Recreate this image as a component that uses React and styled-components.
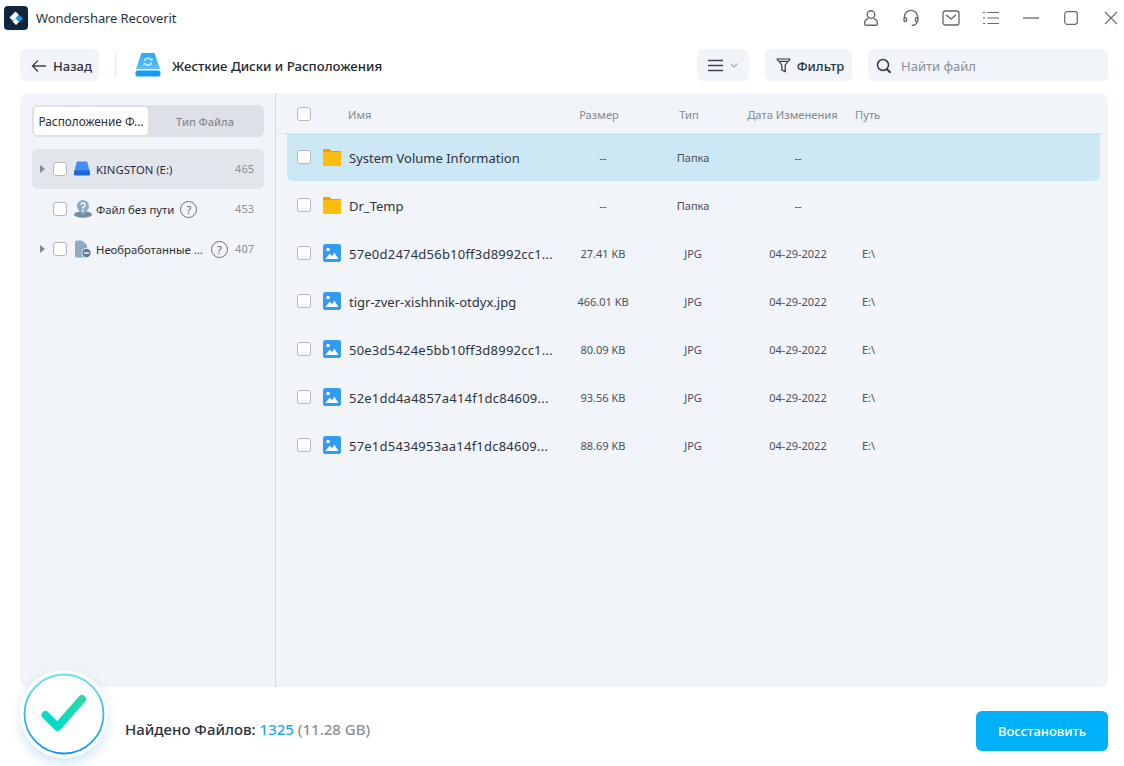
import React from 'react'
import styled, { createGlobalStyle } from 'styled-components'

const GlobalStyle = createGlobalStyle`
  html, body {
    margin: 0;
    padding: 0;
    background: #fff;
  }
  * {
    box-sizing: border-box;
  }
`

const Window = styled.div`
  position: relative;
  display: flex;
  flex-direction: column;
  width: 1124px;
  height: 766px;
  overflow: hidden;
  background: #fff;
  color: #2a2f3a;
  font-family: "Noto Sans", "Open Sans", sans-serif;
`

const TitleBar = styled.div`
  display: flex;
  align-items: center;
  height: 36px;
  padding: 0 3px 0 4px;
  flex-shrink: 0;
`

const AppName = styled.div`
  margin-left: 8px;
  font-size: 13px;
  letter-spacing: -0.1px;
  color: #2c3240;
`

const WindowIcons = styled.div`
  display: flex;
  margin-left: auto;
  margin-right: -10px;
`

const WindowIcon = styled.div`
  display: flex;
  align-items: center;
  justify-content: center;
  width: 40px;
  height: 36px;
  color: #63676f;
`

const Toolbar = styled.div`
  display: flex;
  align-items: center;
  height: 32px;
  margin-top: 13px;
  padding: 0 16px 0 20px;
  flex-shrink: 0;
`

const SoftButton = styled.div`
  display: flex;
  align-items: center;
  justify-content: center;
  height: 32px;
  width: ${p => p.$w}px;
  margin-right: ${p => p.$mr || 0}px;
  padding: 1px 0 0 ${p => p.$pl || 0}px;
  gap: ${p => p.$gap || 0}px;
  background: #f1f4f8;
  border-radius: 6px;
  font-size: 13px;
  font-weight: 500;
  color: #2c3240;
`

const Divider = styled.div`
  width: 1px;
  height: 24px;
  margin: 0 19px 0 16px;
  background: #e3e6ea;
`

const PageTitle = styled.div`
  margin: 1px 0 0 11px;
  font-size: 13.2px;
  font-weight: 500;
  color: #23272f;
`

const ToolbarRight = styled.div`
  display: flex;
  align-items: center;
  margin-left: auto;
`

const SearchBox = styled.div`
  display: flex;
  align-items: center;
  gap: 9px;
  width: 240px;
  height: 32px;
  padding: 1px 0 0 8px;
  background: #f1f4f8;
  border-radius: 6px;
  font-size: 13px;
  color: #8b9097;
`

const Panel = styled.div`
  display: flex;
  height: 594px;
  margin: 12px 16px 0 20px;
  background: #f1f4f8;
  border-radius: 8px;
  flex-shrink: 0;
`

const Sidebar = styled.div`
  width: 256px;
  padding: 12px 11px 0 12px;
  border-right: 1px solid #d6d9dd;
  flex-shrink: 0;
`

const Tabs = styled.div`
  display: flex;
  height: 32px;
  padding: 2px;
  margin-bottom: 12px;
  background: #dde1e7;
  border-radius: 6px;
`

const Tab = styled.div`
  display: flex;
  align-items: center;
  justify-content: center;
  width: ${p => p.$w}px;
  border-radius: 4px;
  font-size: ${p => (p.$active ? '11.8px' : '11px')};
  white-space: nowrap;
  background: ${p => (p.$active ? '#fff' : 'transparent')};
  color: ${p => (p.$active ? '#2a2f3a' : '#85898f')};
  font-weight: ${p => (p.$active ? 400 : 500)};
`

const TreeRow = styled.div`
  display: flex;
  align-items: center;
  height: 40px;
  padding: 0 10px 0 8px;
  border-radius: 6px;
  background: ${p => (p.$active ? '#e1e6ec' : 'transparent')};
`

const CaretSlot = styled.div`
  display: flex;
  width: 13px;
  flex-shrink: 0;
`

const Caret = styled.div`
  width: 0;
  height: 0;
  border-top: 4px solid transparent;
  border-bottom: 4px solid transparent;
  border-left: 5px solid #85898f;
`

const Check = styled.div`
  width: 14px;
  height: 14px;
  margin-right: ${p => p.$mr || 0}px;
  margin-top: ${p => p.$mt || 0}px;
  background: #fff;
  border: 1px solid #b4b8be;
  border-radius: 3px;
  flex-shrink: 0;
`

const TreeIcon = styled.div`
  display: flex;
  width: 18px;
  height: 18px;
  margin-right: 4px;
  flex-shrink: 0;
`

const TreeLabel = styled.div`
  font-size: 11.3px;
  white-space: nowrap;
  color: #2a2f3a;
`

const Help = styled.div`
  display: flex;
  align-items: center;
  justify-content: center;
  width: 17px;
  height: 17px;
  margin-left: ${p => p.$ml}px;
  border: 1px solid #6d7177;
  border-radius: 50%;
  font-size: 11px;
  color: #5f6369;
  flex-shrink: 0;
`

const Count = styled.div`
  margin: -2px 0 0 auto;
  font-size: 11px;
  color: #8b8f95;
`

const Table = styled.div`
  flex: 1;
  min-width: 0;
`

const HeaderRow = styled.div`
  display: grid;
  grid-template-columns: 26px 25px 202px 98px 82px 125px 1fr;
  align-items: center;
  height: 41px;
  padding: 2px 8px 0 21px;
  border-bottom: 1px solid #e2e6ea;
  font-size: 11.2px;
  color: #85898f;
`

const FileRow = styled.div`
  display: grid;
  grid-template-columns: 26px 26px 205px 98px 82px 128px 1fr;
  align-items: center;
  height: 47px;
  margin: 0 8px 1px 11px;
  padding-left: 10px;
  border-radius: ${p => (p.$selected ? '0 0 6px 6px' : '0')};
  background: ${p => (p.$selected ? '#cbe8f4' : 'transparent')};
  border-top: ${p => (p.$selected ? '1px solid #b9dfef' : '1px solid transparent')};
`

const HeadCell = styled.div`
  grid-column: ${p => p.$col};
  text-align: ${p => (p.$center ? 'center' : 'left')};
  white-space: nowrap;
`

const RowIcon = styled.div`
  display: flex;
  width: 18px;
  height: 18px;
  margin-top: -2px;
`

const FileName = styled.div`
  font-size: 13px;
  white-space: nowrap;
  color: #2d3340;
  letter-spacing: ${p => (p.$hash ? '0.22px' : '0')};
`

const Cell = styled.div`
  margin-top: -2px;
  font-size: 11px;
  text-align: center;
  color: #4b5058;
  white-space: nowrap;
`

const PathCell = styled.div`
  margin-top: -2px;
  font-size: 11px;
  color: #4b5058;
`

const Footer = styled.div`
  display: flex;
  align-items: center;
  flex: 1;
  padding: 4px 16px 0 125px;
`

const Found = styled.div`
  font-size: 15px;
  font-weight: 500;
  color: #2c3240;
`

const FoundNum = styled.span`
  color: #19a9ee;
`

const FoundSize = styled.span`
  color: #8b9097;
`

const Restore = styled.div`
  display: flex;
  align-items: center;
  justify-content: center;
  width: 132px;
  height: 40px;
  margin: 5px 0 0 auto;
  background: #00b1fa;
  border-radius: 6px;
  font-size: 13px;
  font-weight: 500;
  color: #fff;
`

const Badge = styled.div`
  position: absolute;
  left: 20px;
  top: 670px;
  width: 88px;
  height: 88px;
  border-radius: 50%;
  background: #fff;
  box-shadow: 0 6px 12px rgba(60, 150, 230, 0.22);
`

const Logo = () => (
  <svg width="24" height="24" viewBox="0 0 24 24">
    <rect width="24" height="24" rx="4" fill="#10263f" />
    <path d="M11.5 5.5 15 9l-6 6-3.5-3.5z" fill="#fff" />
    <path d="M8.5 15.5 12 12l3.5 3.5L12 19z" fill="#fff" />
    <path d="M15 9l4 3.5-4 3.5-3.5-3.5z" fill="#1a9bf0" />
  </svg>
)

const UserIcon = () => (
  <svg width="18" height="18" viewBox="0 0 18 18" fill="none" stroke="currentColor" strokeWidth="1.4">
    <circle cx="9" cy="5.6" r="3.8" />
    <path d="M6 9.4 3.9 11a3 3 0 0 0-1.2 2.4V15a1.3 1.3 0 0 0 1.3 1.2h10A1.3 1.3 0 0 0 15.3 15v-1.6A3 3 0 0 0 14.1 11L12 9.4" />
  </svg>
)

const HeadsetIcon = () => (
  <svg width="18" height="18" viewBox="0 0 18 18" fill="none" stroke="currentColor" strokeWidth="1.4" strokeLinecap="round">
    <path d="M2.4 9.5V8a6.600 6.600 0 0 1 13.2 0v1.500" />
    <rect x="2" y="8.6" width="2.6" height="4" rx="1.3" />
    <rect x="13.4" y="8.6" width="2.6" height="4" rx="1.3" />
    <path d="M15 12.8c-.5 2.100-2.200 3.400-4.700 3.500" />
  </svg>
)

const MailIcon = () => (
  <svg width="18" height="16" viewBox="0 0 18 16" fill="none" stroke="currentColor" strokeWidth="1.3" strokeLinecap="round" strokeLinejoin="round">
    <rect x="1" y="1" width="16" height="14" rx="2.2" />
    <path d="M4.5 5.2 9 9l4.5-3.800" />
  </svg>
)

const ListIcon = () => (
  <svg width="18" height="16" viewBox="0 0 18 16" fill="none" stroke="currentColor" strokeWidth="1.2">
    <path d="M1 2.5h2M1 8h2M1 13.5h2M5.5 2.500H17M5.500 8H17M5.500 13.500H17" />
  </svg>
)

const MinimizeIcon = () => (
  <svg width="16" height="4" viewBox="0 0 16 4" stroke="currentColor" strokeWidth="1.3">
    <path d="M0 2h16" />
  </svg>
)

const MaximizeIcon = () => (
  <svg width="14" height="14" viewBox="0 0 14 14" fill="none" stroke="currentColor" strokeWidth="1.2">
    <rect x="0.7" y="0.7" width="12.6" height="12.6" rx="2.5" />
  </svg>
)

const CloseIcon = () => (
  <svg width="14" height="14" viewBox="0 0 14 14" fill="none" stroke="currentColor" strokeWidth="1.1">
    <path d="M1 1l12 12M13 1 1 13" />
  </svg>
)

const ArrowLeft = () => (
  <svg width="16" height="14" viewBox="0 0 16 14" fill="none" stroke="#3b3f47" strokeWidth="1.3">
    <path d="M15 7H1.500M7 1.500 1.500 7 7 12.500" />
  </svg>
)

const DriveLarge = () => (
  <svg width="26" height="26" viewBox="0 0 26 26">
    <defs>
      <linearGradient id="driveTop" x1="0" y1="0" x2="0" y2="1">
        <stop offset="0" stopColor="#2aa6f8" />
        <stop offset="1" stopColor="#5cc0fb" />
      </linearGradient>
    </defs>
    <path d="M6 2.500A1.500 1.500 0 0 1 7.500 1h11A1.500 1.500 0 0 1 20 2.500L25 17H1z" fill="url(#driveTop)" />
    <rect x="0.5" y="18.5" width="25" height="6" rx="2" fill="#1a9bf3" />
    <path d="M9.500 9a3.600 3.600 0 0 1 6.500-1.200M16.500 10.500a3.600 3.600 0 0 1-6.500 1.200" fill="none" stroke="#cfeeff" strokeWidth="1.5" />
    <path d="M14.800 8.500h2.800V5.800zM11.200 11h-2.800v2.700z" fill="#cfeeff" />
  </svg>
)

const MenuIcon = () => (
  <svg width="15" height="13" viewBox="0 0 15 13" stroke="#3f434b" strokeWidth="1.4">
    <path d="M0 1.500h15M0 6.500h15M0 11.500h15" />
  </svg>
)

const ChevronDown = () => (
  <svg width="8" height="5" viewBox="0 0 8 5" fill="none" stroke="#a4a8ae" strokeWidth="1.1">
    <path d="M.7.700 4 4 7.300.700" />
  </svg>
)

const FunnelIcon = () => (
  <svg width="15" height="15" viewBox="0 0 15 15" fill="none" stroke="#2f333b" strokeWidth="1.2" strokeLinejoin="round">
    <path d="M1 1h13L9.200 7v6.800L5.800 12V7z" />
    <path d="M3.500 3.400h8" />
  </svg>
)

const SearchIcon = () => (
  <svg width="16" height="16" viewBox="0 0 16 16" fill="none" stroke="#33373f" strokeWidth="1.5">
    <circle cx="7" cy="7" r="5.5" />
    <path d="m11 11.300 3.500 3.500" strokeWidth="2" />
  </svg>
)

const DriveSmall = () => (
  <svg width="18" height="18" viewBox="0 0 18 18">
    <path d="M2.500 2.800A1.500 1.500 0 0 1 4 1.500h8a1.500 1.500 0 0 1 1.500 1.300L15.500 11H.5z" fill="#3f8ef0" />
    <rect x="0" y="10.500" width="16" height="5" rx="1.200" fill="#2266d8" />
  </svg>
)

const LostFileIcon = () => (
  <svg width="18" height="18" viewBox="0 0 18 18">
    <ellipse cx="9" cy="14.500" rx="9" ry="3.200" fill="#6f8da6" />
    <path d="M9 0a6 6 0 0 1 6 6c0 3.500-3.500 6-6 9-2.500-3-6-5.500-6-9a6 6 0 0 1 6-6z" fill="#8fabc3" />
    <path d="M7 4.800A2 2 0 1 1 9 7v1.500" fill="none" stroke="#f1f4f8" strokeWidth="1.5" />
    <circle cx="9" cy="10.5" r="1" fill="#f1f4f8" />
  </svg>
)

const RawFileIcon = () => (
  <svg width="18" height="18" viewBox="0 0 18 18">
    <path d="M1 2a1.500 1.500 0 0 1 1.500-1.500H8L13 5v11a1.500 1.500 0 0 1-1.500 1.500h-9A1.500 1.500 0 0 1 1 16z" fill="#8fabc3" />
    <circle cx="12.5" cy="13" r="5" fill="#f1f4f8" />
    <circle cx="12.500" cy="13" r="4.2" fill="#64798c" />
    <path d="M10 13h5" stroke="#fff" strokeWidth="1.4" />
  </svg>
)

const FolderIcon = () => (
  <svg width="18" height="18" viewBox="0 0 18 18">
    <path d="M0 2a1 1 0 0 1 1-1h5.500l2 2H17a1 1 0 0 1 1 1v3H0z" fill="#f59a08" />
    <rect x="0" y="4" width="18" height="14" rx="1.5" fill="#ffbe0d" />
  </svg>
)

const ImageIcon = () => (
  <svg width="18" height="18" viewBox="0 0 18 18">
    <rect width="18" height="18" rx="2.5" fill="#2f9bf5" />
    <circle cx="5" cy="5.5" r="1.8" fill="#fff" />
    <path d="M2.500 15l4.200-5.500 2.300 2.800 2.300-3.800 4.200 6.500z" fill="#fff" />
  </svg>
)

const CheckBadge = () => (
  <svg width="88" height="88" viewBox="0 0 88 88" fill="none">
    <defs>
      <linearGradient id="ring" x1="0" y1="0" x2="0" y2="1">
        <stop offset="0" stopColor="#62e2f0" />
        <stop offset="1" stopColor="#1196f5" />
      </linearGradient>
      <linearGradient id="tick" x1="0" y1="1" x2="1" y2="0">
        <stop offset="0" stopColor="#00dccb" />
        <stop offset="1" stopColor="#29d8a8" />
      </linearGradient>
    </defs>
    <circle cx="44" cy="44" r="39.5" stroke="url(#ring)" strokeWidth="1.8" />
    <path d="M25.500 45 37.500 57 62 29" stroke="url(#tick)" strokeWidth="8" strokeLinecap="round" strokeLinejoin="round" />
  </svg>
)

const files = [
  { name: 'System Volume Information', folder: true, selected: true },
  { name: 'Dr_Temp', folder: true },
  { name: '57e0d2474d56b10ff3d8992cc1...', size: '27.41 KB', hash: true },
  { name: 'tigr-zver-xishhnik-otdyx.jpg', size: '466.01 KB' },
  { name: '50e3d5424e5bb10ff3d8992cc1...', size: '80.09 KB', hash: true },
  { name: '52e1dd4a4857a414f1dc84609...', size: '93.56 KB', hash: true },
  { name: '57e1d5434953aa14f1dc84609...', size: '88.69 KB', hash: true },
]

export default function App() {
  return (
    <Window>
      <GlobalStyle />
      <TitleBar>
        <Logo />
        <AppName>Wondershare Recoverit</AppName>
        <WindowIcons>
          <WindowIcon><UserIcon /></WindowIcon>
          <WindowIcon><HeadsetIcon /></WindowIcon>
          <WindowIcon><MailIcon /></WindowIcon>
          <WindowIcon><ListIcon /></WindowIcon>
          <WindowIcon><MinimizeIcon /></WindowIcon>
          <WindowIcon><MaximizeIcon /></WindowIcon>
          <WindowIcon><CloseIcon /></WindowIcon>
        </WindowIcons>
      </TitleBar>

      <Toolbar>
        <SoftButton $w={79} $gap={6} $pl={4}><ArrowLeft />Назад</SoftButton>
        <Divider />
        <DriveLarge />
        <PageTitle>Жесткие Диски и Расположения</PageTitle>
        <ToolbarRight>
          <SoftButton $w={52} $gap={7} $mr={16}><MenuIcon /><ChevronDown /></SoftButton>
          <SoftButton $w={87} $gap={6} $pl={3} $mr={16}><FunnelIcon />Фильтр</SoftButton>
          <SearchBox><SearchIcon />Найти файл</SearchBox>
        </ToolbarRight>
      </Toolbar>

      <Panel>
        <Sidebar>
          <Tabs>
            <Tab $active $w={114}>Расположение Ф...</Tab>
            <Tab $w={114}>Тип Файла</Tab>
          </Tabs>
          <TreeRow $active>
            <CaretSlot><Caret /></CaretSlot>
            <Check $mr={7} />
            <TreeIcon><DriveSmall /></TreeIcon>
            <TreeLabel>KINGSTON (E:)</TreeLabel>
            <Count>465</Count>
          </TreeRow>
          <TreeRow>
            <CaretSlot />
            <Check $mr={7} />
            <TreeIcon><LostFileIcon /></TreeIcon>
            <TreeLabel>Файл без пути</TreeLabel>
            <Help $ml={6}>?</Help>
            <Count>453</Count>
          </TreeRow>
          <TreeRow>
            <CaretSlot><Caret /></CaretSlot>
            <Check $mr={7} />
            <TreeIcon><RawFileIcon /></TreeIcon>
            <TreeLabel>Необработанные ...</TreeLabel>
            <Help $ml={8}>?</Help>
            <Count>407</Count>
          </TreeRow>
        </Sidebar>

        <Table>
          <HeaderRow>
            <Check />
            <HeadCell $col="3">Имя</HeadCell>
            <HeadCell $col="4" $center>Размер</HeadCell>
            <HeadCell $col="5" $center>Тип</HeadCell>
            <HeadCell $col="6" $center>Дата Изменения</HeadCell>
            <HeadCell $col="7">Путь</HeadCell>
          </HeaderRow>
          {files.map(f => (
            <FileRow key={f.name} $selected={f.selected}>
              <Check $mt={-3} />
              <RowIcon>{f.folder ? <FolderIcon /> : <ImageIcon />}</RowIcon>
              <FileName $hash={f.hash}>{f.name}</FileName>
              <Cell>{f.folder ? '--' : f.size}</Cell>
              <Cell>{f.folder ? 'Папка' : 'JPG'}</Cell>
              <Cell>{f.folder ? '--' : '04-29-2022'}</Cell>
              <PathCell>{f.folder ? '' : 'E:\\'}</PathCell>
            </FileRow>
          ))}
        </Table>
      </Panel>

      <Footer>
        <Found>
          Найдено Файлов: <FoundNum>1325</FoundNum> <FoundSize>(11.28 GB)</FoundSize>
        </Found>
        <Restore>Восстановить</Restore>
      </Footer>

      <Badge><CheckBadge /></Badge>
    </Window>
  )
}
